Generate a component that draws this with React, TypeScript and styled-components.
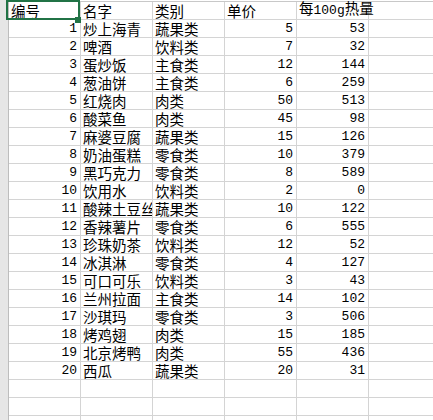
import React from "react";
import styled, { createGlobalStyle } from "styled-components";

const GlobalStyle = createGlobalStyle`
  html, body {
    margin: 0;
    padding: 0;
    background: #ffffff;
    overflow: hidden;
  }
  body {
    font-family: "Noto Sans CJK SC", sans-serif;
  }
`;

const Sheet = styled.div`
  display: flex;
  width: 433px;
  height: 420px;
  overflow: hidden;
  background: #ffffff;
`;

const RowHeaderStrip = styled.div`
  flex: none;
  width: 8px;
  height: 100%;
  background: #e6e6e6;
  border-right: 1px solid #bdbdbd;
`;

const Grid = styled.div`
  display: grid;
  grid-template-columns: repeat(6, 72px);
  grid-auto-rows: 18px;
  align-content: start;
  margin-top: 1px;
  border-top: 1px solid #c8c8c8;
`;

const Cell = styled.div<{ $align: "left" | "right"; $overflow?: boolean }>`
  position: relative;
  box-sizing: border-box;
  display: flex;
  align-items: flex-end;
  justify-content: ${(p) => (p.$align === "right" ? "flex-end" : "flex-start")};
  padding: 0 3px 0 2px;
  border-right: 1px solid #d4d4d4;
  border-bottom: 1px solid #d4d4d4;
  overflow: ${(p) => (p.$overflow ? "visible" : "hidden")};
  white-space: nowrap;
  font-family: "Noto Sans CJK SC", sans-serif;
  font-size: 14.5px;
  line-height: 16px;
  color: #000000;
`;

const Content = styled.span`
  display: block;
  white-space: nowrap;
  line-height: 16px;
`;

const Latin = styled.span`
  font-family: "Liberation Mono", monospace;
  font-size: 13px;
  vertical-align: baseline;
`;

const Selection = styled.div`
  position: absolute;
  left: -3px;
  top: -2px;
  right: 0;
  bottom: -1px;
  border: 2px solid #217346;
  pointer-events: none;
  z-index: 2;
`;

const FillHandle = styled.div`
  position: absolute;
  right: -1px;
  bottom: -4px;
  width: 6px;
  height: 6px;
  background: #217346;
  z-index: 3;
`;

function Txt({ text }: { text: string }) {
  const parts = text.split(/([\x20-\x7e]+)/).filter((s) => s.length > 0);
  return (
    <Content>
      {parts.map((part, i) =>
        /^[\x20-\x7e]+$/.test(part) ? (
          <Latin key={i}>{part}</Latin>
        ) : (
          <React.Fragment key={i}>{part}</React.Fragment>
        )
      )}
    </Content>
  );
}

type Row = [number, string, string, number, number];

const data: Row[] = [
  [1, "炒上海青", "蔬果类", 5, 53],
  [2, "啤酒", "饮料类", 7, 32],
  [3, "蛋炒饭", "主食类", 12, 144],
  [4, "葱油饼", "主食类", 6, 259],
  [5, "红烧肉", "肉类", 50, 513],
  [6, "酸菜鱼", "肉类", 45, 98],
  [7, "麻婆豆腐", "蔬果类", 15, 126],
  [8, "奶油蛋糕", "零食类", 10, 379],
  [9, "黑巧克力", "零食类", 8, 589],
  [10, "饮用水", "饮料类", 2, 0],
  [11, "酸辣土豆丝", "蔬果类", 10, 122],
  [12, "香辣薯片", "零食类", 6, 555],
  [13, "珍珠奶茶", "饮料类", 12, 52],
  [14, "冰淇淋", "零食类", 4, 127],
  [15, "可口可乐", "饮料类", 3, 43],
  [16, "兰州拉面", "主食类", 14, 102],
  [17, "沙琪玛", "零食类", 3, 506],
  [18, "烤鸡翅", "肉类", 15, 185],
  [19, "北京烤鸭", "肉类", 55, 436],
  [20, "西瓜", "蔬果类", 20, 31],
];

const headers = ["编号", "名字", "类别", "单价", "每100g热量", ""];
const EMPTY_ROWS = 3;

export default function App() {
  return (
    <>
      <GlobalStyle />
      <Sheet>
        <RowHeaderStrip />
        <Grid>
          {headers.map((h, i) => (
            <Cell key={`h${i}`} $align="left" $overflow={i === 0 || i === 4}>
              {h && <Txt text={h} />}
              {i === 0 && (
                <>
                  <Selection />
                  <FillHandle />
                </>
              )}
            </Cell>
          ))}
          {data.map((r) => (
            <React.Fragment key={r[0]}>
              <Cell $align="right">
                <Txt text={String(r[0])} />
              </Cell>
              <Cell $align="left">
                <Txt text={r[1]} />
              </Cell>
              <Cell $align="left">
                <Txt text={r[2]} />
              </Cell>
              <Cell $align="right">
                <Txt text={String(r[3])} />
              </Cell>
              <Cell $align="right">
                <Txt text={String(r[4])} />
              </Cell>
              <Cell $align="left" />
            </React.Fragment>
          ))}
          {Array.from({ length: EMPTY_ROWS * 6 }).map((_, i) => (
            <Cell key={`e${i}`} $align="left" />
          ))}
        </Grid>
      </Sheet>
    </>
  );
}
